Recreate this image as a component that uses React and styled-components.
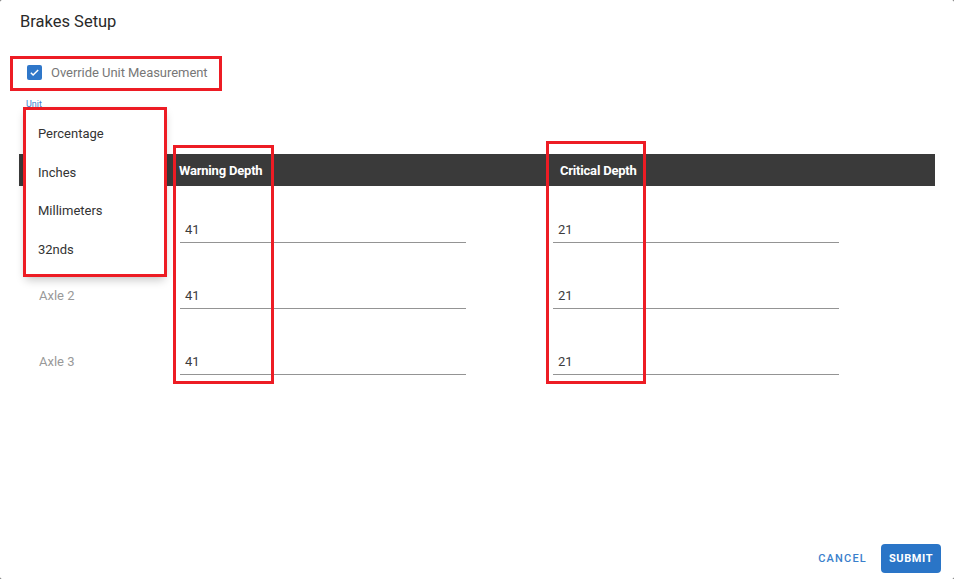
import React from "react";
import styled, { createGlobalStyle } from "styled-components";

const Global = createGlobalStyle`
  html, body { margin: 0; padding: 0; background: #5a5a5a; }
  body { font-family: Roboto, "Liberation Sans", Arial, sans-serif; }
  * { box-sizing: border-box; }
`;

const Dialog = styled.div`
  position: relative;
  width: 954px;
  height: 579px;
  background: #fff;
  border-radius: 2px;
  display: flex;
  flex-direction: column;
  overflow: hidden;
`;

const Title = styled.h2`
  margin: 0;
  padding: 12px 20px 0;
  font-size: 16.5px;
  line-height: 20px;
  font-weight: 400;
  color: #2a2a2a;
`;

const Content = styled.div`
  flex: 1;
  display: flex;
  flex-direction: column;
`;

const CheckRow = styled.label`
  margin-top: 28px;
  padding-left: 27px;
  height: 24px;
  display: flex;
  align-items: center;
  gap: 9px;
  font-size: 13px;
  letter-spacing: -0.05px;
  color: #777;
`;

const Box = styled.span`
  width: 15px;
  height: 15px;
  border-radius: 2px;
  background: #2f77c9;
  display: flex;
  align-items: center;
  justify-content: center;
`;

const UnitField = styled.div`
  margin-top: 15px;
  padding-left: 26px;
  height: 55px;
`;

const UnitLabel = styled.div`
  font-size: 9px;
  line-height: 11px;
  color: #3f7fd0;
`;

const Table = styled.div`
  margin-left: 19px;
  width: 916px;
`;

const Header = styled.div`
  height: 32px;
  background: #3a3a3a;
  display: grid;
  grid-template-columns: 160px 381px 1fr;
  align-items: center;
`;

const HeadCell = styled.div`
  color: #fff;
  font-size: 13px;
  font-weight: 700;
  letter-spacing: -0.2px;
`;

const Row = styled.div`
  height: 66px;
  padding-bottom: 9px;
  display: grid;
  grid-template-columns: 161px 373px 1fr;
  align-items: end;
`;

const AxleLabel = styled.div`
  padding-left: 20px;
  font-size: 13px;
  line-height: 24px;
  margin-bottom: 1px;
  color: #999;
`;

const Input = styled.div`
  width: 286px;
  height: 25px;
  border-bottom: 1px solid #949494;
  padding-left: 5px;
  font-size: 13px;
  line-height: 24px;
  color: #3c3c3c;
`;

const Footer = styled.div`
  display: flex;
  justify-content: flex-end;
  align-items: center;
  gap: 14px;
  padding: 0 13px 6px 0;
`;

const TextButton = styled.button`
  border: 0;
  background: none;
  padding: 0;
  font-family: inherit;
  font-size: 11px;
  font-weight: 500;
  letter-spacing: 1.2px;
  color: #3a7fcc;
`;

const PrimaryButton = styled.button`
  border: 0;
  width: 60px;
  height: 29px;
  border-radius: 4px;
  background: #2a75c7;
  color: #fff;
  font-family: inherit;
  font-size: 11px;
  font-weight: 700;
  letter-spacing: 0.6px;
  padding: 0;
`;

const Menu = styled.div`
  position: absolute;
  left: 25px;
  top: 108px;
  width: 140px;
  padding: 6px 0;
  background: #fff;
  border-radius: 4px;
  box-shadow: 0 5px 10px rgba(0,0,0,0.22), 0 1px 3px rgba(0,0,0,0.12);
`;

const MenuItem = styled.div`
  height: 38.7px;
  display: flex;
  align-items: center;
  padding-left: 13px;
  font-size: 13px;
  color: #333;
`;

const Mark = styled.div`
  position: absolute;
  border: 3px solid #ed1c24;
  pointer-events: none;
  left: ${p => p.$x}px;
  top: ${p => p.$y}px;
  width: ${p => p.$w}px;
  height: ${p => p.$h}px;
`;

const rows = ["Axle 1", "Axle 2", "Axle 3"];

export default function App() {
  return (
    <>
      <Global />
      <Dialog>
        <Title>Brakes Setup</Title>
        <Content>
          <CheckRow>
            <Box>
              <svg width="11" height="11" viewBox="0 0 24 24">
                <path d="M4 12.5l5 5L20 6.5" fill="none" stroke="#fff" strokeWidth="3.2" />
              </svg>
            </Box>
            Override Unit Measurement
          </CheckRow>
          <UnitField>
            <UnitLabel>Unit</UnitLabel>
          </UnitField>
          <Table>
            <Header>
              <div />
              <HeadCell>Warning Depth</HeadCell>
              <HeadCell>Critical Depth</HeadCell>
            </Header>
            {rows.map(r => (
              <Row key={r}>
                <AxleLabel>{r}</AxleLabel>
                <Input>41</Input>
                <Input>21</Input>
              </Row>
            ))}
          </Table>
        </Content>
        <Footer>
          <TextButton>CANCEL</TextButton>
          <PrimaryButton>SUBMIT</PrimaryButton>
        </Footer>
        <Menu>
          <MenuItem>Percentage</MenuItem>
          <MenuItem>Inches</MenuItem>
          <MenuItem>Millimeters</MenuItem>
          <MenuItem>32nds</MenuItem>
        </Menu>
        <Mark $x={10} $y={56} $w={212} $h={35} />
        <Mark $x={23} $y={107} $w={144} $h={170} />
        <Mark $x={173} $y={145} $w={101} $h={239} />
        <Mark $x={546} $y={141} $w={100} $h={243} />
      </Dialog>
    </>
  );
}
